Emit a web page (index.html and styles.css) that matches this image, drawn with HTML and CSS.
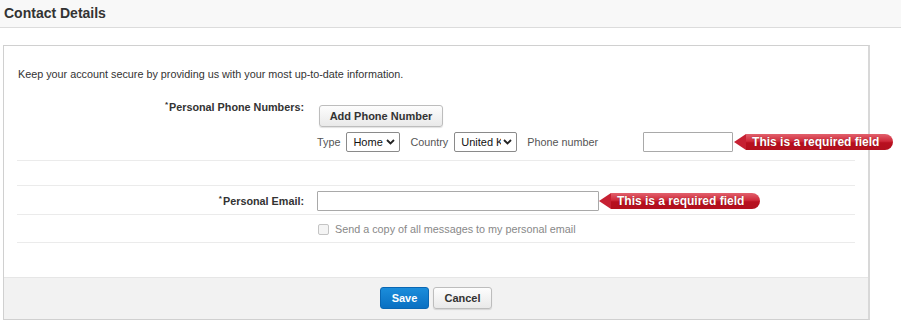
FILE: index.html
```html
<!DOCTYPE html>
<html>
<head>
<meta charset="utf-8">
<link rel="stylesheet" href="styles.css">
</head>
<body>
<div class="page-header"><h1>Contact Details</h1></div>
<div class="panel">
  <div class="panel-body">
    <p class="intro">Keep your account secure by providing us with your most up-to-date information.</p>
    <div class="row phone-row">
      <div class="label"><sup>*</sup>Personal Phone Numbers:</div>
      <div class="field">
        <button class="btn btn-default btn-add">Add Phone Number</button>
        <div class="phone-line">
          <span class="small-label">Type</span>
          <span class="select select-type"><span class="select-text">Home</span><svg class="chev" width="9" height="6" viewBox="0 0 9 6"><path d="M1 1l3.5 3.5L8 1" fill="none" stroke="#222" stroke-width="1.8"/></svg></span>
          <span class="small-label label-country">Country</span>
          <span class="select select-country"><span class="select-text">United Kingdom</span><svg class="chev" width="9" height="6" viewBox="0 0 9 6"><path d="M1 1l3.5 3.5L8 1" fill="none" stroke="#222" stroke-width="1.8"/></svg></span>
          <span class="small-label phone-label">Phone number</span>
          <input class="input input-phone" type="text">
          <span class="error error-phone">This is a required field</span>
        </div>
      </div>
    </div>
    <div class="row empty-row"></div>
    <div class="row email-row">
      <div class="label"><sup>*</sup>Personal Email:</div>
      <div class="field inline">
        <input class="input input-email" type="text">
        <span class="error error-email">This is a required field</span>
      </div>
    </div>
    <div class="row check-row">
      <div class="label"></div>
      <div class="field inline">
        <span class="checkbox"></span>
        <span class="check-text">Send a copy of all messages to my personal email</span>
      </div>
    </div>
  </div>
  <div class="panel-footer">
    <button class="btn btn-primary">Save</button>
    <button class="btn btn-default btn-cancel">Cancel</button>
  </div>
</div>
</body>
</html>
```
FILE: styles.css
```css
* { box-sizing: border-box; }
html, body { margin: 0; padding: 0; background: #fff; }
body {
  font-family: "Liberation Sans", Arial, sans-serif;
  font-size: 10.8px;
  color: #333;
  width: 901px;
  height: 323px;
  overflow: hidden;
}
.page-header {
  height: 28px;
  background: #f8f8f8;
  border-bottom: 1px solid #dcdcdc;
  padding-left: 4px;
  display: flex;
  align-items: center;
}
.page-header h1 {
  margin: 0;
  font-size: 14px;
  font-weight: bold;
  color: #333;
  position: relative;
  top: -1px;
}
.panel {
  margin: 17px 0 0 3px;
  width: 867px;
  border: 1px solid #d0d0d0;
  border-right-width: 2px;
  border-right-color: #d8d8d8;
}
.panel-body {
  padding: 21px 13px 34px 13px;
}
.intro {
  margin: 0 0 16px 1px;
  line-height: 14px;
  color: #333;
}
.row {
  display: grid;
  grid-template-columns: 287px 1fr;
  column-gap: 13px;
  border-bottom: 1px solid #ebebeb;
}
.label {
  text-align: right;
  font-weight: bold;
  color: #333;
  line-height: 14px;
}
.label sup {
  font-size: 8px;
  line-height: 0;
  vertical-align: 4px;
  margin-right: 1px;
}
.phone-row { padding: 3px 0 8px 0; }
.phone-row .field { padding-top: 5px; }
.btn {
  font-family: "Liberation Sans", Arial, sans-serif;
  font-size: 11px;
  font-weight: bold;
  height: 22px;
  border-radius: 3px;
  padding: 0;
  cursor: pointer;
  line-height: 20px;
}
.btn-default {
  color: #333;
  background: linear-gradient(#fdfdfd, #e9e9e9);
  border: 1px solid #bdbdbd;
  box-shadow: 0 1px 1px rgba(0,0,0,0.12);
}
.btn-add { margin-left: 2px; width: 124px; }
.phone-line {
  display: flex;
  align-items: center;
  margin-top: 5px;
  height: 20px;
}
.phone-line > * { flex: none; }
.small-label {
  color: #555;
  margin-right: 6px;
  white-space: nowrap;
}
.label-country { margin-right: 6px; }
.select {
  display: inline-flex;
  align-items: center;
  justify-content: space-between;
  height: 20px;
  border: 1px solid #8a8a8a;
  border-radius: 2px;
  background: #fff;
  font-size: 11px;
  color: #111;
  padding: 0 4px 0 6px;
  margin-right: 10px;
  overflow: hidden;
}
.select-text { white-space: nowrap; overflow: hidden; flex: none; }
.select-type { width: 54px; }
.select-country { width: 63px; }
.select-country .select-text { width: 40px; }
.chev { flex: none; }
.phone-label { margin-right: 45px; }
.input {
  height: 20px;
  border: 1px solid #a9a9a9;
  border-radius: 1px;
  background: #fff;
  font-family: "Liberation Sans", Arial, sans-serif;
  font-size: 12px;
  padding: 0 4px;
  margin: 0;
  flex: none;
}
.input-phone { width: 90px; }
.input-email { width: 282px; }
.error {
  position: relative;
  display: inline-block;
  flex: none;
  height: 16px;
  line-height: 16px;
  margin-left: 13px;
  padding: 0 0 0 6px;
  color: #fff;
  font-weight: bold;
  font-size: 12px;
  white-space: nowrap;
  border-radius: 0 8px 8px 0;
  background: linear-gradient(#e2616d 0%, #cf2a3a 45%, #b8101f 55%, #b2101e 100%);
  text-shadow: 0 0 1px rgba(80,0,0,0.6);
}
.error::before {
  content: "";
  position: absolute;
  left: -12px;
  top: 0;
  border-style: solid;
  border-width: 8px 12px 8px 0;
  border-color: transparent #c62032 transparent transparent;
}
.error-phone { width: 147px; margin-left: 13px; }
.error-email { width: 149px; margin-left: 12px; }
.empty-row { height: 25px; }
.email-row { padding: 5px 0 3px 0; }
.email-row .label { line-height: 20px; }
.field.inline { display: flex; align-items: center; }
.check-row { padding: 8px 0 7px 0; }
.checkbox {
  display: inline-block;
  flex: none;
  width: 11px;
  height: 11px;
  margin-left: 1px;
  border: 1px solid #c4c4c4;
  border-radius: 2px;
  background: #f4f4f4;
}
.check-text {
  margin-left: 6px;
  color: #888;
  line-height: 12px;
}
.panel-footer {
  background: #f2f2f2;
  border-top: 1px solid #e6e6e6;
  padding: 9px 0 10px 0;
  display: flex;
  justify-content: center;
  gap: 4px;
}
.btn-primary {
  color: #fff;
  width: 49px;
  background: linear-gradient(#1b8ddb, #0a70c2);
  border: 1px solid #0a67b3;
}
.btn-cancel { width: 59px; }
```
